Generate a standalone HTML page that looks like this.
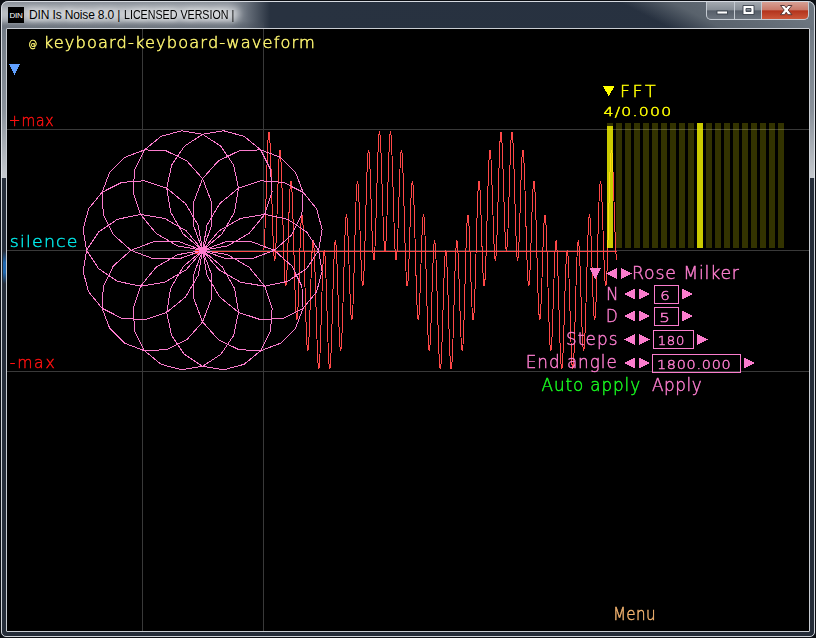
<!DOCTYPE html>
<html><head><meta charset="utf-8"><title>DIN Is Noise 8.0</title>
<style>
html,body{margin:0;padding:0;background:#000;}
body{width:816px;height:638px;position:relative;overflow:hidden;font-family:"Liberation Sans",sans-serif}
#frame{position:absolute;left:0;top:0;width:816px;height:638px;background:#0c0f14;}
#glass{position:absolute;left:1px;top:1px;width:814px;height:636px;border-radius:7px 7px 5px 5px;background:#252d39;overflow:hidden}
#hl{position:absolute;left:1px;top:1px;width:812px;height:634px;border-radius:7px 7px 5px 5px;border:1px solid rgba(226,230,235,0.9)}
#refl{position:absolute;left:0;top:0;width:814px;height:177px;background:linear-gradient(180deg,#6c7580 0px,#737c86 30px,#8a929b 110px,#c6cacf 177px);}
#tbar{position:absolute;left:1px;top:1px;width:812px;height:27px;background:linear-gradient(90deg,#848b94 0px,#868d96 226px,#6a727d 244px,#283240 268px,#273140 100%);}
#tdiag{position:absolute;left:599px;top:1px;width:216px;height:28px;background:linear-gradient(27.5deg,rgba(39,49,64,0) 34px,#59626c 58px,#6c757f 104px)}
#glow{position:absolute;left:-8px;top:5px;width:248px;height:15px;border-radius:8px;background:rgba(255,255,255,.45);filter:blur(3.5px)}
#tshade{position:absolute;left:1px;top:20px;width:262px;height:8px;background:linear-gradient(180deg,rgba(70,78,90,0),rgba(70,78,90,.35) 60%)}
#client{position:absolute;left:6px;top:28px;width:802px;height:602px;background:#000;border:1px solid #c8ccd2;box-sizing:content-box;border-radius:1px}
#blue{position:absolute;left:2px;top:250px;width:4px;height:33px;background:linear-gradient(180deg,rgba(32,104,176,0) 0,#2068b0 35%,#2068b0 65%,rgba(32,104,176,0) 100%)}
#icon{position:absolute;left:8px;top:7px;width:16px;height:16px;background:#000;color:#fff;font:8px/17px "Liberation Sans",sans-serif;text-align:center;letter-spacing:-0.3px}
#title{position:absolute;left:29px;top:7px;font:12px/16px "Liberation Sans",sans-serif;color:#000;white-space:pre;letter-spacing:0;text-shadow:0 0 6px #fff,0 0 10px #fff}
.t{position:absolute;white-space:nowrap;font-family:"DejaVu Sans Light","DejaVu Sans","Liberation Sans",sans-serif;font-weight:200;line-height:0;transform-origin:0 0}
.btns{position:absolute;top:2px;left:706px;width:103px;height:18px;border:1px solid #c4cad2;border-top:none;border-radius:0 0 5px 5px;box-sizing:border-box;overflow:hidden;background:#c4cad2}
.b{position:absolute;top:0;height:17px}
#bmin{left:0;width:27px;background:linear-gradient(180deg,#a3a9b0 0,#878e96 46%,#565e69 52%,#6b737d 100%)}
#bmax{left:28px;width:26px;background:linear-gradient(180deg,#a3a9b0 0,#878e96 46%,#565e69 52%,#6b737d 100%)}
#bcls{left:55px;width:47px;background:linear-gradient(180deg,#d7a094 0,#c97a6a 46%,#b3331c 52%,#cb573a 100%)}
</style></head><body>
<div id="frame"><div id="glass"><div id="refl"></div><div id="tbar"></div><div id="tdiag"></div><div id="glow"></div><div id="tshade"></div><div id="blue"></div></div>
<div id="hl"></div>
<div id="client"></div>
<div id="icon">DIN</div>
<div id="title"><span style="letter-spacing:-0.14px">DIN Is Noise 8.0 | </span><span style="display:inline-block;transform:scaleX(0.89);transform-origin:0 50%">LICENSED VERSION |</span></div>
<div class="btns"><div class="b" id="bmin"></div><div class="b" id="bmax"></div><div class="b" id="bcls"></div>
<svg width="103" height="18" style="position:absolute;left:0;top:0">
<rect x="10" y="9" width="10.500" height="3" fill="#fff" stroke="#3a424c" stroke-width="0.9"/>
<path d="M36 3.500h11v9h-11z M39 6.500v3h5v-3z" fill="#fff" fill-rule="evenodd" stroke="#3a424c" stroke-width="0.9"/>
<path d="M73.500 3.500h4l1.700 2.300 1.700-2.300h4l-3.700 4.500 3.700 4.700h-4l-1.700-2.400-1.700 2.400h-4l3.700-4.700z" fill="#fff" stroke="#4a2a2a" stroke-width="0.9"/>
</svg></div>
</div>
<svg width="802" height="602" viewBox="7 29 802 602" style="position:absolute;left:7px;top:29px" shape-rendering="crispEdges">
<rect x="142" y="29" width="1" height="602" fill="#393939"/>
<rect x="263" y="29" width="1" height="602" fill="#393939"/>
<rect x="7" y="129" width="802" height="1" fill="#393939"/>
<rect x="7" y="250" width="802" height="1" fill="#393939"/>
<rect x="7" y="371" width="802" height="1" fill="#393939"/>
<rect x="203" y="251" width="414" height="1" fill="#ff4848"/>
<polyline points="263.5,250.5 263.7,250.0 263.9,248.6 264.2,246.3 264.4,243.1 264.6,239.0 264.8,234.2 265.0,228.8 265.3,222.7 265.5,216.1 265.7,209.1 265.9,201.8 266.2,194.4 266.4,186.9 266.6,179.4 266.8,172.2 267.0,165.2 267.3,158.7 267.5,152.7 267.7,147.3 267.9,142.6 268.1,138.7 268.4,135.6 268.6,133.5 268.8,132.2 269.0,132.0 269.2,132.6 269.5,134.3 269.7,136.8 269.9,140.3 270.1,144.6 270.3,149.7 270.6,155.4 270.8,161.8 271.0,168.7 271.2,176.1 271.5,183.7 271.7,191.5 271.9,199.4 272.1,207.2 272.3,214.9 272.6,222.3 272.8,229.2 273.0,235.7 273.2,241.6 273.4,246.8 273.7,251.2 273.9,254.8 274.1,257.5 274.3,259.3 274.5,260.1 274.8,260.0 275.0,259.0 275.2,257.0 275.4,254.2 275.6,250.5 275.9,246.1 276.1,240.9 276.3,235.2 276.5,229.0 276.8,222.4 277.0,215.4 277.2,208.4 277.4,201.2 277.6,194.1 277.9,187.2 278.1,180.6 278.3,174.5 278.5,168.8 278.7,163.7 279.0,159.4 279.2,155.8 279.4,153.1 279.6,151.2 279.8,150.3 280.1,150.4 280.3,151.4 280.5,153.3 280.7,156.2 280.9,160.0 281.2,164.6 281.4,170.0 281.6,176.1 281.8,182.8 282.1,190.0 282.3,197.7 282.5,205.6 282.7,213.7 282.9,221.9 283.2,230.0 283.4,238.0 283.6,245.6 283.8,252.9 284.0,259.6 284.3,265.8 284.5,271.2 284.7,275.9 284.9,279.7 285.1,282.7 285.4,284.8 285.6,285.9 285.8,286.0 286.0,285.2 286.3,283.5 286.5,280.9 286.7,277.5 286.9,273.3 287.1,268.4 287.4,262.9 287.6,256.9 287.8,250.5 288.0,243.8 288.2,236.9 288.5,230.0 288.7,223.1 288.9,216.4 289.1,210.0 289.3,204.0 289.6,198.6 289.8,193.7 290.0,189.5 290.2,186.1 290.4,183.6 290.7,181.9 290.9,181.2 291.1,181.4 291.3,182.6 291.6,184.7 291.8,187.7 292.0,191.6 292.2,196.4 292.4,201.9 292.7,208.1 292.9,215.0 293.1,222.3 293.3,230.1 293.5,238.1 293.8,246.4 294.0,254.6 294.2,262.9 294.4,270.9 294.6,278.7 294.9,286.0 295.1,292.9 295.3,299.1 295.5,304.6 295.7,309.4 296.0,313.3 296.2,316.3 296.4,318.4 296.6,319.6 296.9,319.8 297.1,319.1 297.3,317.4 297.5,314.9 297.7,311.5 298.0,307.3 298.2,302.4 298.4,297.0 298.6,291.0 298.8,284.6 299.1,277.9 299.3,271.0 299.5,264.1 299.7,257.2 299.9,250.5 300.2,244.1 300.4,238.1 300.6,232.6 300.8,227.7 301.0,223.5 301.3,220.1 301.5,217.5 301.7,215.8 301.9,215.0 302.2,215.1 302.4,216.2 302.6,218.3 302.8,221.3 303.0,225.1 303.3,229.8 303.5,235.2 303.7,241.4 303.9,248.1 304.1,255.4 304.4,263.0 304.6,271.0 304.8,279.1 305.0,287.3 305.2,295.4 305.5,303.3 305.7,311.0 305.9,318.2 306.1,324.9 306.3,331.0 306.6,336.4 306.8,341.0 307.0,344.8 307.2,347.7 307.5,349.6 307.7,350.6 307.9,350.7 308.1,349.8 308.3,347.9 308.6,345.2 308.8,341.6 309.0,337.3 309.2,332.2 309.4,326.5 309.7,320.4 309.9,313.8 310.1,306.9 310.3,299.8 310.5,292.6 310.8,285.6 311.0,278.6 311.2,272.0 311.4,265.8 311.7,260.1 311.9,254.9 312.1,250.5 312.3,246.8 312.5,244.0 312.8,242.0 313.0,241.0 313.2,240.9 313.4,241.7 313.6,243.5 313.9,246.2 314.1,249.8 314.3,254.2 314.5,259.4 314.7,265.3 315.0,271.8 315.2,278.7 315.4,286.1 315.6,293.8 315.8,301.6 316.1,309.5 316.3,317.3 316.5,324.9 316.7,332.3 317.0,339.2 317.2,345.6 317.4,351.3 317.6,356.4 317.8,360.7 318.1,364.2 318.3,366.7 318.5,368.4 318.7,369.0 318.9,368.8 319.2,367.5 319.4,365.4 319.6,362.3 319.8,358.4 320.0,353.7 320.3,348.3 320.5,342.3 320.7,335.8 320.9,328.8 321.1,321.6 321.4,314.1 321.6,306.6 321.8,299.2 322.0,291.9 322.3,284.9 322.5,278.3 322.7,272.2 322.9,266.8 323.1,262.0 323.4,257.9 323.6,254.7 323.8,252.4 324.0,251.0 324.2,250.5 324.5,251.0 324.7,252.4 324.9,254.7 325.1,257.9 325.3,262.0 325.6,266.8 325.8,272.2 326.0,278.3 326.2,284.9 326.4,291.9 326.7,299.2 326.9,306.6 327.1,314.1 327.3,321.6 327.6,328.8 327.8,335.8 328.0,342.3 328.2,348.3 328.4,353.7 328.7,358.4 328.9,362.3 329.1,365.4 329.3,367.5 329.5,368.8 329.8,369.0 330.0,368.4 330.2,366.7 330.4,364.2 330.6,360.7 330.9,356.4 331.1,351.3 331.3,345.6 331.5,339.2 331.8,332.3 332.0,324.9 332.2,317.3 332.4,309.5 332.6,301.6 332.9,293.8 333.1,286.1 333.3,278.7 333.5,271.8 333.7,265.3 334.0,259.4 334.2,254.2 334.4,249.8 334.6,246.2 334.8,243.5 335.1,241.7 335.3,240.9 335.5,241.0 335.7,242.0 335.9,244.0 336.2,246.8 336.4,250.5 336.6,254.9 336.8,260.1 337.1,265.8 337.3,272.0 337.5,278.6 337.7,285.6 337.9,292.6 338.2,299.8 338.4,306.9 338.6,313.8 338.8,320.4 339.0,326.5 339.3,332.2 339.5,337.3 339.7,341.6 339.9,345.2 340.1,347.9 340.4,349.8 340.6,350.7 340.8,350.6 341.0,349.6 341.2,347.7 341.5,344.8 341.7,341.0 341.9,336.4 342.1,331.0 342.4,324.9 342.6,318.2 342.8,311.0 343.0,303.3 343.2,295.4 343.5,287.3 343.7,279.1 343.9,271.0 344.1,263.0 344.3,255.4 344.6,248.1 344.8,241.4 345.0,235.2 345.2,229.8 345.4,225.1 345.7,221.3 345.9,218.3 346.1,216.2 346.3,215.1 346.5,215.0 346.8,215.8 347.0,217.5 347.2,220.1 347.4,223.5 347.7,227.7 347.9,232.6 348.1,238.1 348.3,244.1 348.5,250.5 348.8,257.2 349.0,264.1 349.2,271.0 349.4,277.9 349.6,284.6 349.9,291.0 350.1,297.0 350.3,302.4 350.5,307.3 350.7,311.5 351.0,314.9 351.2,317.4 351.4,319.1 351.6,319.8 351.9,319.6 352.1,318.4 352.3,316.3 352.5,313.3 352.7,309.4 353.0,304.6 353.2,299.1 353.4,292.9 353.6,286.0 353.8,278.7 354.1,270.9 354.3,262.9 354.5,254.6 354.7,246.4 354.9,238.1 355.2,230.1 355.4,222.3 355.6,215.0 355.8,208.1 356.0,201.9 356.3,196.4 356.5,191.6 356.7,187.7 356.9,184.7 357.2,182.6 357.4,181.4 357.6,181.2 357.8,181.9 358.0,183.6 358.3,186.1 358.5,189.5 358.7,193.7 358.9,198.6 359.1,204.0 359.4,210.0 359.6,216.4 359.8,223.1 360.0,230.0 360.2,236.9 360.5,243.8 360.7,250.5 360.9,256.9 361.1,262.9 361.3,268.4 361.6,273.3 361.8,277.5 362.0,280.9 362.2,283.5 362.5,285.2 362.7,286.0 362.9,285.9 363.1,284.8 363.3,282.7 363.6,279.7 363.8,275.9 364.0,271.2 364.2,265.8 364.4,259.6 364.7,252.9 364.9,245.6 365.1,238.0 365.3,230.0 365.5,221.9 365.8,213.7 366.0,205.6 366.2,197.7 366.4,190.0 366.6,182.8 366.9,176.1 367.1,170.0 367.3,164.6 367.5,160.0 367.8,156.2 368.0,153.3 368.2,151.4 368.4,150.4 368.6,150.3 368.9,151.2 369.1,153.1 369.3,155.8 369.5,159.4 369.7,163.7 370.0,168.8 370.2,174.5 370.4,180.6 370.6,187.2 370.8,194.1 371.1,201.2 371.3,208.4 371.5,215.4 371.7,222.4 371.9,229.0 372.2,235.2 372.4,240.9 372.6,246.1 372.8,250.5 373.1,254.2 373.3,257.0 373.5,259.0 373.7,260.0 373.9,260.1 374.2,259.3 374.4,257.5 374.6,254.8 374.8,251.2 375.0,246.8 375.3,241.6 375.5,235.7 375.7,229.2 375.9,222.3 376.1,214.9 376.4,207.2 376.6,199.4 376.8,191.5 377.0,183.7 377.3,176.1 377.5,168.7 377.7,161.8 377.9,155.4 378.1,149.7 378.4,144.6 378.6,140.3 378.8,136.8 379.0,134.3 379.2,132.6 379.5,132.0 379.7,132.2 379.9,133.5 380.1,135.6 380.3,138.7 380.6,142.6 380.8,147.3 381.0,152.7 381.2,158.7 381.4,165.2 381.7,172.2 381.9,179.4 382.1,186.9 382.3,194.4 382.6,201.8 382.8,209.1 383.0,216.1 383.2,222.7 383.4,228.8 383.7,234.2 383.9,239.0 384.1,243.1 384.3,246.3 384.5,248.6 384.8,250.0 385.0,250.5 385.2,250.0 385.4,248.6 385.6,246.3 385.9,243.1 386.1,239.0 386.3,234.2 386.5,228.8 386.7,222.7 387.0,216.1 387.2,209.1 387.4,201.8 387.6,194.4 387.9,186.9 388.1,179.4 388.3,172.2 388.5,165.2 388.7,158.7 389.0,152.7 389.2,147.3 389.4,142.6 389.6,138.7 389.8,135.6 390.1,133.5 390.3,132.2 390.5,132.0 390.7,132.6 390.9,134.3 391.2,136.8 391.4,140.3 391.6,144.6 391.8,149.7 392.0,155.4 392.3,161.8 392.5,168.7 392.7,176.1 392.9,183.7 393.2,191.5 393.4,199.4 393.6,207.2 393.8,214.9 394.0,222.3 394.3,229.2 394.5,235.7 394.7,241.6 394.9,246.8 395.1,251.2 395.4,254.8 395.6,257.5 395.8,259.3 396.0,260.1 396.2,260.0 396.5,259.0 396.7,257.0 396.9,254.2 397.1,250.5 397.4,246.1 397.6,240.9 397.8,235.2 398.0,229.0 398.2,222.4 398.5,215.4 398.7,208.4 398.9,201.2 399.1,194.1 399.3,187.2 399.6,180.6 399.8,174.5 400.0,168.8 400.2,163.7 400.4,159.4 400.7,155.8 400.9,153.1 401.1,151.2 401.3,150.3 401.5,150.4 401.8,151.4 402.0,153.3 402.2,156.2 402.4,160.0 402.7,164.6 402.9,170.0 403.1,176.1 403.3,182.8 403.5,190.0 403.8,197.7 404.0,205.6 404.2,213.7 404.4,221.9 404.6,230.0 404.9,238.0 405.1,245.6 405.3,252.9 405.5,259.6 405.7,265.8 406.0,271.2 406.2,275.9 406.4,279.7 406.6,282.7 406.8,284.8 407.1,285.9 407.3,286.0 407.5,285.2 407.7,283.5 408.0,280.9 408.2,277.5 408.4,273.3 408.6,268.4 408.8,262.9 409.1,256.9 409.3,250.5 409.5,243.8 409.7,236.9 409.9,230.0 410.2,223.1 410.4,216.4 410.6,210.0 410.8,204.0 411.0,198.6 411.3,193.7 411.5,189.5 411.7,186.1 411.9,183.6 412.1,181.9 412.4,181.2 412.6,181.4 412.8,182.6 413.0,184.7 413.3,187.7 413.5,191.6 413.7,196.4 413.9,201.9 414.1,208.1 414.4,215.0 414.6,222.3 414.8,230.1 415.0,238.1 415.2,246.4 415.5,254.6 415.7,262.9 415.9,270.9 416.1,278.7 416.3,286.0 416.6,292.9 416.8,299.1 417.0,304.6 417.2,309.4 417.4,313.3 417.7,316.3 417.9,318.4 418.1,319.6 418.3,319.8 418.6,319.1 418.8,317.4 419.0,314.9 419.2,311.5 419.4,307.3 419.7,302.4 419.9,297.0 420.1,291.0 420.3,284.6 420.5,277.9 420.8,271.0 421.0,264.1 421.2,257.2 421.4,250.5 421.6,244.1 421.9,238.1 422.1,232.6 422.3,227.7 422.5,223.5 422.8,220.1 423.0,217.5 423.2,215.8 423.4,215.0 423.6,215.1 423.9,216.2 424.1,218.3 424.3,221.3 424.5,225.1 424.7,229.8 425.0,235.2 425.2,241.4 425.4,248.1 425.6,255.4 425.8,263.0 426.1,271.0 426.3,279.1 426.5,287.3 426.7,295.4 426.9,303.3 427.2,311.0 427.4,318.2 427.6,324.9 427.8,331.0 428.1,336.4 428.3,341.0 428.5,344.8 428.7,347.7 428.9,349.6 429.2,350.6 429.4,350.7 429.6,349.8 429.8,347.9 430.0,345.2 430.3,341.6 430.5,337.3 430.7,332.2 430.9,326.5 431.1,320.4 431.4,313.8 431.6,306.9 431.8,299.8 432.0,292.6 432.2,285.6 432.5,278.6 432.7,272.0 432.9,265.8 433.1,260.1 433.4,254.9 433.6,250.5 433.8,246.8 434.0,244.0 434.2,242.0 434.5,241.0 434.7,240.9 434.9,241.7 435.1,243.5 435.3,246.2 435.6,249.8 435.8,254.2 436.0,259.4 436.2,265.3 436.4,271.8 436.7,278.7 436.9,286.1 437.1,293.8 437.3,301.6 437.5,309.5 437.8,317.3 438.0,324.9 438.2,332.3 438.4,339.2 438.7,345.6 438.9,351.3 439.1,356.4 439.3,360.7 439.5,364.2 439.8,366.7 440.0,368.4 440.2,369.0 440.4,368.8 440.6,367.5 440.9,365.4 441.1,362.3 441.3,358.4 441.5,353.7 441.7,348.3 442.0,342.3 442.2,335.8 442.4,328.8 442.6,321.6 442.9,314.1 443.1,306.6 443.3,299.2 443.5,291.9 443.7,284.9 444.0,278.3 444.2,272.2 444.4,266.8 444.6,262.0 444.8,257.9 445.1,254.7 445.3,252.4 445.5,251.0 445.7,250.5 445.9,251.0 446.2,252.4 446.4,254.7 446.6,257.9 446.8,262.0 447.0,266.8 447.3,272.2 447.5,278.3 447.7,284.9 447.9,291.9 448.2,299.2 448.4,306.6 448.6,314.1 448.8,321.6 449.0,328.8 449.3,335.8 449.5,342.3 449.7,348.3 449.9,353.7 450.1,358.4 450.4,362.3 450.6,365.4 450.8,367.5 451.0,368.8 451.2,369.0 451.5,368.4 451.7,366.7 451.9,364.2 452.1,360.7 452.3,356.4 452.6,351.3 452.8,345.6 453.0,339.2 453.2,332.3 453.5,324.9 453.7,317.3 453.9,309.5 454.1,301.6 454.3,293.8 454.6,286.1 454.8,278.7 455.0,271.8 455.2,265.3 455.4,259.4 455.7,254.2 455.9,249.8 456.1,246.2 456.3,243.5 456.5,241.7 456.8,240.9 457.0,241.0 457.2,242.0 457.4,244.0 457.6,246.8 457.9,250.5 458.1,254.9 458.3,260.1 458.5,265.8 458.8,272.0 459.0,278.6 459.2,285.6 459.4,292.6 459.6,299.8 459.9,306.9 460.1,313.8 460.3,320.4 460.5,326.5 460.7,332.2 461.0,337.3 461.2,341.6 461.4,345.2 461.6,347.9 461.8,349.8 462.1,350.7 462.3,350.6 462.5,349.6 462.7,347.7 463.0,344.8 463.2,341.0 463.4,336.4 463.6,331.0 463.8,324.9 464.1,318.2 464.3,311.0 464.5,303.3 464.7,295.4 464.9,287.3 465.2,279.1 465.4,271.0 465.6,263.0 465.8,255.4 466.0,248.1 466.3,241.4 466.5,235.2 466.7,229.8 466.9,225.1 467.1,221.3 467.4,218.3 467.6,216.2 467.8,215.1 468.0,215.0 468.3,215.8 468.5,217.5 468.7,220.1 468.9,223.5 469.1,227.7 469.4,232.6 469.6,238.1 469.8,244.1 470.0,250.5 470.2,257.2 470.5,264.1 470.7,271.0 470.9,277.9 471.1,284.6 471.3,291.0 471.6,297.0 471.8,302.4 472.0,307.3 472.2,311.5 472.4,314.9 472.7,317.4 472.9,319.1 473.1,319.8 473.3,319.6 473.6,318.4 473.8,316.3 474.0,313.3 474.2,309.4 474.4,304.6 474.7,299.1 474.9,292.9 475.1,286.0 475.3,278.7 475.5,270.9 475.8,262.9 476.0,254.6 476.2,246.4 476.4,238.1 476.6,230.1 476.9,222.3 477.1,215.0 477.3,208.1 477.5,201.9 477.7,196.4 478.0,191.6 478.2,187.7 478.4,184.7 478.6,182.6 478.9,181.4 479.1,181.2 479.3,181.9 479.5,183.6 479.7,186.1 480.0,189.5 480.2,193.7 480.4,198.6 480.6,204.0 480.8,210.0 481.1,216.4 481.3,223.1 481.5,230.0 481.7,236.9 481.9,243.8 482.2,250.5 482.4,256.9 482.6,262.9 482.8,268.4 483.0,273.3 483.3,277.5 483.5,280.9 483.7,283.5 483.9,285.2 484.2,286.0 484.4,285.9 484.6,284.8 484.8,282.7 485.0,279.7 485.3,275.9 485.5,271.2 485.7,265.8 485.9,259.6 486.1,252.9 486.4,245.6 486.6,238.0 486.8,230.0 487.0,221.9 487.2,213.7 487.5,205.6 487.7,197.7 487.9,190.0 488.1,182.8 488.4,176.1 488.6,170.0 488.8,164.6 489.0,160.0 489.2,156.2 489.5,153.3 489.7,151.4 489.9,150.4 490.1,150.3 490.3,151.2 490.6,153.1 490.8,155.8 491.0,159.4 491.2,163.7 491.4,168.8 491.7,174.5 491.9,180.6 492.1,187.2 492.3,194.1 492.5,201.2 492.8,208.4 493.0,215.4 493.2,222.4 493.4,229.0 493.7,235.2 493.9,240.9 494.1,246.1 494.3,250.5 494.5,254.2 494.8,257.0 495.0,259.0 495.2,260.0 495.4,260.1 495.6,259.3 495.9,257.5 496.1,254.8 496.3,251.2 496.5,246.8 496.7,241.6 497.0,235.7 497.2,229.2 497.4,222.3 497.6,214.9 497.8,207.2 498.1,199.4 498.3,191.5 498.5,183.7 498.7,176.1 499.0,168.7 499.2,161.8 499.4,155.4 499.6,149.7 499.8,144.6 500.1,140.3 500.3,136.8 500.5,134.3 500.7,132.6 500.9,132.0 501.2,132.2 501.4,133.5 501.6,135.6 501.8,138.7 502.0,142.6 502.3,147.3 502.5,152.7 502.7,158.7 502.9,165.2 503.1,172.2 503.4,179.4 503.6,186.9 503.8,194.4 504.0,201.8 504.3,209.1 504.5,216.1 504.7,222.7 504.9,228.8 505.1,234.2 505.4,239.0 505.6,243.1 505.8,246.3 506.0,248.6 506.2,250.0 506.5,250.5 506.7,250.0 506.9,248.6 507.1,246.3 507.3,243.1 507.6,239.0 507.8,234.2 508.0,228.8 508.2,222.7 508.5,216.1 508.7,209.1 508.9,201.8 509.1,194.4 509.3,186.9 509.6,179.4 509.8,172.2 510.0,165.2 510.2,158.7 510.4,152.7 510.7,147.3 510.9,142.6 511.1,138.7 511.3,135.6 511.5,133.5 511.8,132.2 512.0,132.0 512.2,132.6 512.4,134.3 512.6,136.8 512.9,140.3 513.1,144.6 513.3,149.7 513.5,155.4 513.8,161.8 514.0,168.7 514.2,176.1 514.4,183.7 514.6,191.5 514.9,199.4 515.1,207.2 515.3,214.9 515.5,222.3 515.7,229.2 516.0,235.7 516.2,241.6 516.4,246.8 516.6,251.2 516.8,254.8 517.1,257.5 517.3,259.3 517.5,260.1 517.7,260.0 517.9,259.0 518.2,257.0 518.4,254.2 518.6,250.5 518.8,246.1 519.1,240.9 519.3,235.2 519.5,229.0 519.7,222.4 519.9,215.4 520.2,208.4 520.4,201.2 520.6,194.1 520.8,187.2 521.0,180.6 521.3,174.5 521.5,168.8 521.7,163.7 521.9,159.4 522.1,155.8 522.4,153.1 522.6,151.2 522.8,150.3 523.0,150.4 523.2,151.4 523.5,153.3 523.7,156.2 523.9,160.0 524.1,164.6 524.4,170.0 524.6,176.1 524.8,182.8 525.0,190.0 525.2,197.7 525.5,205.6 525.7,213.7 525.9,221.9 526.1,230.0 526.3,238.0 526.6,245.6 526.8,252.9 527.0,259.6 527.2,265.8 527.4,271.2 527.7,275.9 527.9,279.7 528.1,282.7 528.3,284.8 528.5,285.9 528.8,286.0 529.0,285.2 529.2,283.5 529.4,280.9 529.7,277.5 529.9,273.3 530.1,268.4 530.3,262.9 530.5,256.9 530.8,250.5 531.0,243.8 531.2,236.9 531.4,230.0 531.6,223.1 531.9,216.4 532.1,210.0 532.3,204.0 532.5,198.6 532.7,193.7 533.0,189.5 533.2,186.1 533.4,183.6 533.6,181.9 533.9,181.2 534.1,181.4 534.3,182.6 534.5,184.7 534.7,187.7 535.0,191.6 535.2,196.4 535.4,201.9 535.6,208.1 535.8,215.0 536.1,222.3 536.3,230.1 536.5,238.1 536.7,246.4 536.9,254.6 537.2,262.9 537.4,270.9 537.6,278.7 537.8,286.0 538.0,292.9 538.3,299.1 538.5,304.6 538.7,309.4 538.9,313.3 539.2,316.3 539.4,318.4 539.6,319.6 539.8,319.8 540.0,319.1 540.3,317.4 540.5,314.9 540.7,311.5 540.9,307.3 541.1,302.4 541.4,297.0 541.6,291.0 541.8,284.6 542.0,277.9 542.2,271.0 542.5,264.1 542.7,257.2 542.9,250.5 543.1,244.1 543.3,238.1 543.6,232.6 543.8,227.7 544.0,223.5 544.2,220.1 544.5,217.5 544.7,215.8 544.9,215.0 545.1,215.1 545.3,216.2 545.6,218.3 545.8,221.3 546.0,225.1 546.2,229.8 546.4,235.2 546.7,241.4 546.9,248.1 547.1,255.4 547.3,263.0 547.5,271.0 547.8,279.1 548.0,287.3 548.2,295.4 548.4,303.3 548.6,311.0 548.9,318.2 549.1,324.9 549.3,331.0 549.5,336.4 549.8,341.0 550.0,344.8 550.2,347.7 550.4,349.6 550.6,350.6 550.9,350.7 551.1,349.8 551.3,347.9 551.5,345.2 551.7,341.6 552.0,337.3 552.2,332.2 552.4,326.5 552.6,320.4 552.8,313.8 553.1,306.9 553.3,299.8 553.5,292.6 553.7,285.6 554.0,278.6 554.2,272.0 554.4,265.8 554.6,260.1 554.8,254.9 555.1,250.5 555.3,246.8 555.5,244.0 555.7,242.0 555.9,241.0 556.2,240.9 556.4,241.7 556.6,243.5 556.8,246.2 557.0,249.8 557.3,254.2 557.5,259.4 557.7,265.3 557.9,271.8 558.1,278.7 558.4,286.1 558.6,293.8 558.8,301.6 559.0,309.5 559.3,317.3 559.5,324.9 559.7,332.3 559.9,339.2 560.1,345.6 560.4,351.3 560.6,356.4 560.8,360.7 561.0,364.2 561.2,366.7 561.5,368.4 561.7,369.0 561.9,368.8 562.1,367.5 562.3,365.4 562.6,362.3 562.8,358.4 563.0,353.7 563.2,348.3 563.4,342.3 563.7,335.8 563.9,328.8 564.1,321.6 564.3,314.1 564.6,306.6 564.8,299.2 565.0,291.9 565.2,284.9 565.4,278.3 565.7,272.2 565.9,266.8 566.1,262.0 566.3,257.9 566.5,254.7 566.8,252.4 567.0,251.0 567.2,250.5 567.4,251.0 567.6,252.4 567.9,254.7 568.1,257.9 568.3,262.0 568.5,266.8 568.7,272.2 569.0,278.3 569.2,284.9 569.4,291.9 569.6,299.2 569.9,306.6 570.1,314.1 570.3,321.6 570.5,328.8 570.7,335.8 571.0,342.3 571.2,348.3 571.4,353.7 571.6,358.4 571.8,362.3 572.1,365.4 572.3,367.5 572.5,368.8 572.7,369.0 572.9,368.4 573.2,366.7 573.4,364.2 573.6,360.7 573.8,356.4 574.1,351.3 574.3,345.6 574.5,339.2 574.7,332.3 574.9,324.9 575.2,317.3 575.4,309.5 575.6,301.6 575.8,293.8 576.0,286.1 576.3,278.7 576.5,271.8 576.7,265.3 576.9,259.4 577.1,254.2 577.4,249.8 577.6,246.2 577.8,243.5 578.0,241.7 578.2,240.9 578.5,241.0 578.7,242.0 578.9,244.0 579.1,246.8 579.4,250.5 579.6,254.9 579.8,260.1 580.0,265.8 580.2,272.0 580.5,278.6 580.7,285.6 580.9,292.6 581.1,299.8 581.3,306.9 581.6,313.8 581.8,320.4 582.0,326.5 582.2,332.2 582.4,337.3 582.7,341.6 582.9,345.2 583.1,347.9 583.3,349.8 583.5,350.7 583.8,350.6 584.0,349.6 584.2,347.7 584.4,344.8 584.7,341.0 584.9,336.4 585.1,331.0 585.3,324.9 585.5,318.2 585.8,311.0 586.0,303.3 586.2,295.4 586.4,287.3 586.6,279.1 586.9,271.0 587.1,263.0 587.3,255.4 587.5,248.1 587.7,241.4 588.0,235.2 588.2,229.8 588.4,225.1 588.6,221.3 588.8,218.3 589.1,216.2 589.3,215.1 589.5,215.0 589.7,215.8 590.0,217.5 590.2,220.1 590.4,223.5 590.6,227.7 590.8,232.6 591.1,238.1 591.3,244.1 591.5,250.5 591.7,257.2 591.9,264.1 592.2,271.0 592.4,277.9 592.6,284.6 592.8,291.0 593.0,297.0 593.3,302.4 593.5,307.3 593.7,311.5 593.9,314.9 594.1,317.4 594.4,319.1 594.6,319.8 594.8,319.6 595.0,318.4 595.3,316.3 595.5,313.3 595.7,309.4 595.9,304.6 596.1,299.1 596.4,292.9 596.6,286.0 596.8,278.7 597.0,270.9 597.2,262.9 597.5,254.6 597.7,246.4 597.9,238.1 598.1,230.1 598.3,222.3 598.6,215.0 598.8,208.1 599.0,201.9 599.2,196.4 599.5,191.6 599.7,187.7 599.9,184.7 600.1,182.6 600.3,181.4 600.6,181.2 600.8,181.9 601.0,183.6 601.2,186.1 601.4,189.5 601.7,193.7 601.9,198.6 602.1,204.0 602.3,210.0 602.5,216.4 602.8,223.1 603.0,230.0 603.2,236.9 603.4,243.8 603.6,250.5 603.9,256.9 604.1,262.9 604.3,268.4 604.5,273.3 604.8,277.5 605.0,280.9 605.2,283.5 605.4,285.2 605.6,286.0 605.9,285.9 606.1,284.8 606.3,282.7 606.5,279.7 606.7,275.9 607.0,271.2 607.2,265.8 607.4,259.6 607.6,252.9 607.8,245.6 608.1,238.0 608.3,230.0 608.5,221.9 608.7,213.7 608.9,205.6 609.2,197.7 609.4,190.0 609.6,182.8 609.8,176.1 610.1,170.0 610.3,164.6 610.5,160.0 610.7,156.2 610.9,153.3 611.2,151.4 611.4,150.4 611.6,150.3 611.8,151.2 612.0,153.1 612.3,155.8 612.5,159.4 612.7,163.7 612.9,168.8 613.1,174.5 613.4,180.6 613.6,187.2 613.8,194.1 614.0,201.2 614.2,208.4 614.5,215.4 614.7,222.4 614.9,229.0 615.1,235.2 615.4,240.9 615.6,246.1 615.8,250.5 616.0,254.2 616.2,257.0 616.5,259.0 616.7,260.0 616.9,260.1" fill="none" stroke="#ff4848" stroke-width="1" stroke-linejoin="round"/>
<rect x="195" y="249" width="5" height="5" fill="#ff3020"/>
<polyline points="202.6,250.3 227.6,245.9 249.2,233.3 264.7,214.4 272.1,192.0 270.5,169.4 260.6,149.8 244.1,136.3 223.7,130.8 202.6,134.3 184.3,146.3 171.6,165.1 166.7,188.2 170.7,212.3 183.2,234.0 202.6,250.3 226.4,259.0 251.5,258.9 274.3,250.3 291.9,234.6 301.9,214.2 303.1,192.3 295.5,172.3 280.6,157.4 260.6,149.8 238.7,151.0 218.3,161.0 202.6,178.6 194.0,201.4 193.9,226.5 202.6,250.3 218.9,269.7 240.6,282.2 264.7,286.2 287.8,281.3 306.6,268.6 318.6,250.3 322.1,229.2 316.6,208.8 303.1,192.3 283.5,182.4 260.9,180.8 238.5,188.2 219.6,203.7 207.0,225.3 202.6,250.3 207.0,275.3 219.6,296.9 238.5,312.4 260.9,319.8 283.5,318.2 303.1,308.3 316.6,291.8 322.1,271.4 318.6,250.3 306.6,232.0 287.8,219.3 264.7,214.4 240.6,218.4 218.9,230.9 202.6,250.3 193.9,274.1 194.0,299.2 202.6,322.0 218.3,339.6 238.7,349.6 260.6,350.8 280.6,343.2 295.5,328.3 303.1,308.3 301.9,286.4 291.9,266.0 274.3,250.3 251.5,241.7 226.4,241.6 202.6,250.3 183.2,266.6 170.7,288.3 166.7,312.4 171.6,335.5 184.3,354.3 202.6,366.3 223.7,369.8 244.1,364.3 260.6,350.8 270.5,331.2 272.1,308.6 264.7,286.2 249.2,267.3 227.6,254.7 202.6,250.3 177.6,254.7 156.0,267.3 140.5,286.2 133.1,308.6 134.7,331.2 144.6,350.8 161.1,364.3 181.5,369.8 202.6,366.3 220.9,354.3 233.6,335.5 238.5,312.4 234.5,288.3 222.0,266.6 202.6,250.3 178.8,241.6 153.7,241.7 130.9,250.3 113.3,266.0 103.3,286.4 102.1,308.3 109.7,328.3 124.6,343.2 144.6,350.8 166.5,349.6 186.9,339.6 202.6,322.0 211.2,299.2 211.3,274.1 202.6,250.3 186.3,230.9 164.6,218.4 140.5,214.4 117.4,219.3 98.6,232.0 86.6,250.3 83.1,271.4 88.6,291.8 102.1,308.3 121.7,318.2 144.3,319.8 166.7,312.4 185.6,296.9 198.2,275.3 202.6,250.3 198.2,225.3 185.6,203.7 166.7,188.2 144.3,180.8 121.7,182.4 102.1,192.3 88.6,208.8 83.1,229.2 86.6,250.3 98.6,268.6 117.4,281.3 140.5,286.2 164.6,282.2 186.3,269.7 202.6,250.3 211.3,226.5 211.2,201.4 202.6,178.6 186.9,161.0 166.5,151.0 144.6,149.8 124.6,157.4 109.7,172.3 102.1,192.3 103.3,214.2 113.3,234.6 130.9,250.3 153.7,258.9 178.8,259.0 202.6,250.3 222.0,234.0 234.5,212.3 238.5,188.2 233.6,165.1 220.9,146.3 202.6,134.3 181.5,130.8 161.1,136.3 144.6,149.8 134.7,169.4 133.1,192.0 140.5,214.4 156.0,233.3 177.6,245.9 202.6,250.3" fill="none" stroke="#fb7ccd" stroke-width="1"/>
<rect x="199" y="247" width="7" height="7" rx="2" fill="#fb7ccd"/>
<rect x="607" y="123" width="6" height="125" fill="#ffff00" fill-opacity="0.2"/>
<rect x="616" y="123" width="6" height="125" fill="#ffff00" fill-opacity="0.2"/>
<rect x="625" y="123" width="6" height="125" fill="#ffff00" fill-opacity="0.2"/>
<rect x="634" y="123" width="6" height="125" fill="#ffff00" fill-opacity="0.2"/>
<rect x="643" y="123" width="6" height="125" fill="#ffff00" fill-opacity="0.2"/>
<rect x="652" y="123" width="6" height="125" fill="#ffff00" fill-opacity="0.2"/>
<rect x="661" y="123" width="6" height="125" fill="#ffff00" fill-opacity="0.2"/>
<rect x="670" y="123" width="6" height="125" fill="#ffff00" fill-opacity="0.2"/>
<rect x="679" y="123" width="6" height="125" fill="#ffff00" fill-opacity="0.2"/>
<rect x="688" y="123" width="6" height="125" fill="#ffff00" fill-opacity="0.2"/>
<rect x="697" y="123" width="6" height="125" fill="#ffff00" fill-opacity="0.2"/>
<rect x="706" y="123" width="6" height="125" fill="#ffff00" fill-opacity="0.2"/>
<rect x="715" y="123" width="6" height="125" fill="#ffff00" fill-opacity="0.2"/>
<rect x="724" y="123" width="6" height="125" fill="#ffff00" fill-opacity="0.2"/>
<rect x="733" y="123" width="6" height="125" fill="#ffff00" fill-opacity="0.2"/>
<rect x="742" y="123" width="6" height="125" fill="#ffff00" fill-opacity="0.2"/>
<rect x="751" y="123" width="6" height="125" fill="#ffff00" fill-opacity="0.2"/>
<rect x="760" y="123" width="6" height="125" fill="#ffff00" fill-opacity="0.2"/>
<rect x="769" y="123" width="6" height="125" fill="#ffff00" fill-opacity="0.2"/>
<rect x="778" y="123" width="6" height="125" fill="#ffff00" fill-opacity="0.2"/>
<rect x="607" y="126" width="6" height="122" fill="#ffff00" fill-opacity="0.75"/>
<rect x="697" y="123" width="6" height="125" fill="#ffff00" fill-opacity="0.75"/>
<polygon points="9,64 20,64 14.5,75" fill="#60a0ff"/>
<polygon points="603,86 614.5,86 608.75,96.5" fill="#ffff00"/>
<polygon points="589.5,268 601,268 595.25,279.5" fill="#fb7ccd"/>
<polygon points="616.5,268 616.5,279 606.5,273.5" fill="#fb7ccd"/>
<polygon points="620.5,268 620.5,279 631.5,273.5" fill="#fb7ccd"/>
<polygon points="635,288.5 635,299.5 624,294.0" fill="#fb7ccd"/>
<polygon points="638.5,288.5 638.5,299.5 649.5,294.0" fill="#fb7ccd"/>
<polygon points="682,288.5 682,299.5 693,294.0" fill="#fb7ccd"/>
<polygon points="635,310.5 635,321.5 624,316.0" fill="#fb7ccd"/>
<polygon points="638.5,310.5 638.5,321.5 649.5,316.0" fill="#fb7ccd"/>
<polygon points="682,310.5 682,321.5 693,316.0" fill="#fb7ccd"/>
<polygon points="635,334 635,345 624,339.5" fill="#fb7ccd"/>
<polygon points="638.5,334 638.5,345 649.5,339.5" fill="#fb7ccd"/>
<polygon points="697,334 697,345 708,339.5" fill="#fb7ccd"/>
<polygon points="635,357.5 635,368.5 624,363.0" fill="#fb7ccd"/>
<polygon points="638.5,357.5 638.5,368.5 649.5,363.0" fill="#fb7ccd"/>
<polygon points="744,357.5 744,368.5 755,363.0" fill="#fb7ccd"/>
<rect x="654.5" y="285.5" width="24" height="18" fill="none" stroke="#fb7ccd" stroke-width="1"/>
<rect x="654.5" y="307.5" width="24" height="18" fill="none" stroke="#fb7ccd" stroke-width="1"/>
<rect x="653.5" y="330.5" width="40" height="18" fill="none" stroke="#fb7ccd" stroke-width="1"/>
<rect x="652.5" y="354.5" width="88" height="18" fill="none" stroke="#fb7ccd" stroke-width="1"/>
</svg>
<svg width="816" height="638" style="position:absolute;left:0;top:0;will-change:transform;font-family:'DejaVu Sans Light','DejaVu Sans','Liberation Sans',sans-serif;font-weight:200">
<text transform="translate(28.6 46.7) scale(0.9 1)" font-size="9.5" fill="#fcf470" stroke="#fcf470" stroke-width="0.45" letter-spacing="0">@</text>
<text transform="translate(43.7 48) scale(1.08 1)" font-size="15" fill="#fcf470" stroke="#fcf470" stroke-width="0.45" letter-spacing="1.063">keyboard-keyboard-waveform</text>
<text transform="translate(8.8 126) scale(0.85 1)" font-size="16.5" fill="#ff1010" stroke="#ff1010" stroke-width="0.45" letter-spacing="1.02">+max</text>
<text transform="translate(9.8 247) scale(1.05 1)" font-size="16.5" fill="#00e8e8" stroke="#00e8e8" stroke-width="0.45" letter-spacing="1.143">silence</text>
<text transform="translate(9.8 368) scale(0.95 1)" font-size="16.5" fill="#ff1010" stroke="#ff1010" stroke-width="0.45" letter-spacing="1.789">-max</text>
<text transform="translate(619.9 97) scale(1.05 1)" font-size="16.6" fill="#ffff00" stroke="#ffff00" stroke-width="0.45" letter-spacing="2.524">FFT</text>
<text transform="translate(603.5 115.5) scale(1.35 1)" font-size="11.6" fill="#ffff00" stroke="#ffff00" stroke-width="0.45" letter-spacing="0.963">4/0.000</text>
<text transform="translate(632 278.8) scale(1.03 1)" font-size="16.8" fill="#fb7ccd" stroke="#fb7ccd" stroke-width="0.45" letter-spacing="0.806">Rose Milker</text>
<text transform="translate(606 299.7) scale(1 1)" font-size="16.8" fill="#fb7ccd" stroke="#fb7ccd" stroke-width="0.45" letter-spacing="0">N</text>
<text transform="translate(606 321.8) scale(0.9 1)" font-size="16.8" fill="#fb7ccd" stroke="#fb7ccd" stroke-width="0.45" letter-spacing="0">D</text>
<text transform="translate(660.2 299.7) scale(1.25 1)" font-size="12" fill="#fb7ccd" stroke="#fb7ccd" stroke-width="0.45" letter-spacing="0">6</text>
<text transform="translate(659.2 321.8) scale(1.4 1)" font-size="12" fill="#fb7ccd" stroke="#fb7ccd" stroke-width="0.45" letter-spacing="0">5</text>
<text transform="translate(566 345) scale(1.0 1)" font-size="16.8" fill="#fb7ccd" stroke="#fb7ccd" stroke-width="0.45" letter-spacing="1.125">Steps</text>
<text transform="translate(657.7 344.7) scale(1.1 1)" font-size="12" fill="#fb7ccd" stroke="#fb7ccd" stroke-width="0.45" letter-spacing="0.682">180</text>
<text transform="translate(525.8 368.3) scale(1.0 1)" font-size="16.8" fill="#fb7ccd" stroke="#fb7ccd" stroke-width="0.45" letter-spacing="0.963">End angle</text>
<text transform="translate(656.9 368.7) scale(1.2 1)" font-size="12" fill="#fb7ccd" stroke="#fb7ccd" stroke-width="0.45" letter-spacing="0.607">1800.000</text>
<text transform="translate(541.6 390.7) scale(1.0 1)" font-size="16.8" fill="#18fa20" stroke="#18fa20" stroke-width="0.45" letter-spacing="0.889">Auto apply</text>
<text transform="translate(652 390.7) scale(1.0 1)" font-size="16.8" fill="#fb7ccd" stroke="#fb7ccd" stroke-width="0.45" letter-spacing="0.55">Apply</text>
<text transform="translate(612.9 620.2) scale(0.9 1)" font-size="16.8" fill="#f4b470" stroke="#f4b470" stroke-width="0.45" letter-spacing="0.444">Menu</text>
</svg>
</body></html>
